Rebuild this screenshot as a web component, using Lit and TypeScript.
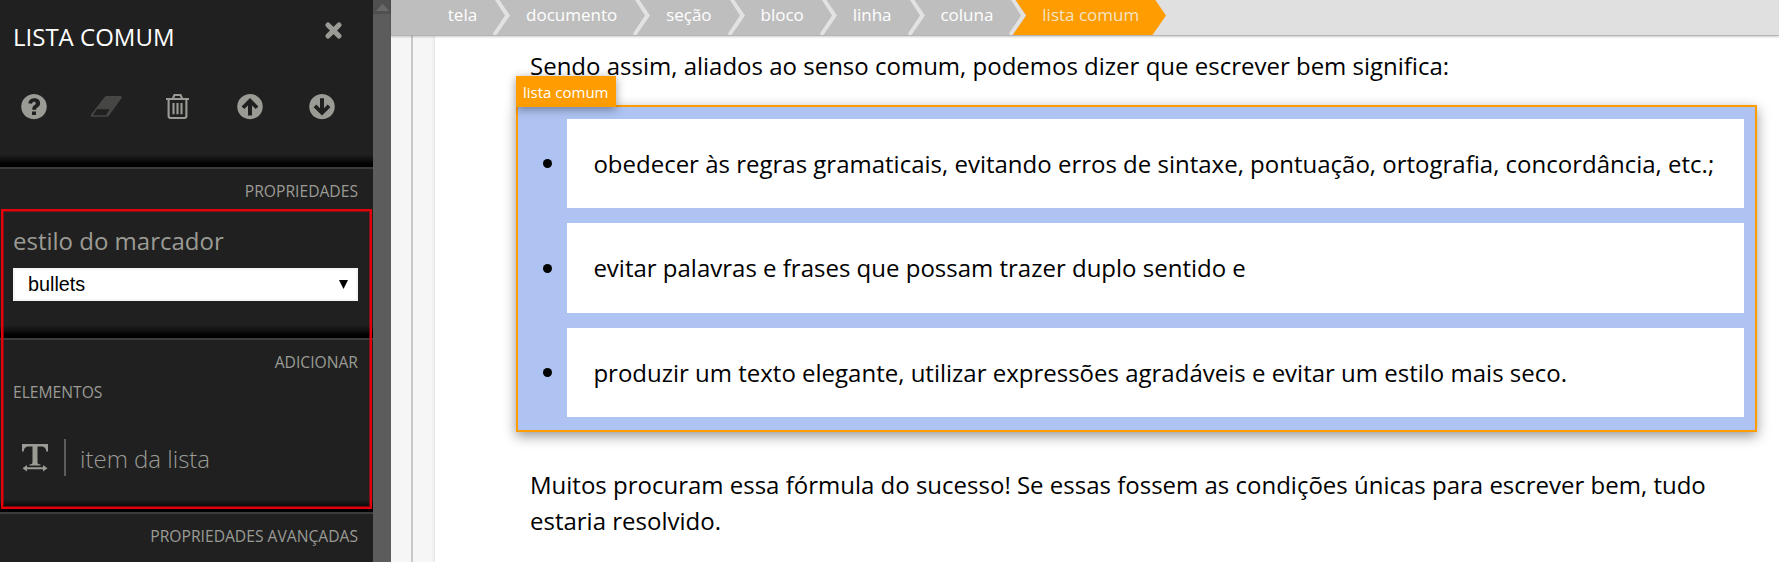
import { LitElement, html, css, svg } from "lit";
import { customElement } from "lit/decorators.js";
import { classMap } from "lit/directives/class-map.js";

const icons = {
  help: svg`<path fill-rule="evenodd" d="M13 0a12.800 12.600 0 1 0 .001 0zM11 17.500h4v3.600h-4zM7.300 9.200C7.800 6 10.200 4.300 13.200 4.300c3.400 0 5.900 1.900 5.900 4.900 0 2.200-1.300 3.400-2.700 4.300-.9.600-1.300 1-1.300 2.300h-3.900c0-2.500.6-3.500 2.100-4.600 1-.7 1.500-1.100 1.500-1.900 0-1-.7-1.500-1.800-1.500-1.100 0-1.700.7-2 2z"/>`,
  eraser: svg`<path fill-rule="evenodd" d="M17.300 2h13c1.500 0 2 1.100 1.200 2.200L19.200 21.200c-.8 1.100-1.700 1.600-2.900 1.600H2.300c-1.500 0-2-1.100-1.200-2.300L14.300 3.500c.9-1.100 1.700-1.500 3-1.500zM6.800 15.200L3 21.200h13.200L19.500 15.200z"/>`,
  trash: svg`<path fill="none" stroke="currentColor" stroke-width="2.100" d="M0 5h23M2.600 5V22a2 2 0 0 0 2 2h13.800a2 2 0 0 0 2-2V5M6.700 5l1.700-4h6.200l1.700 4M7.500 9v11.200M11.500 9v11.200M15.500 9v11.200"/>`,
  up: svg`<path fill-rule="evenodd" d="M13 0a12.800 12.600 0 1 0 .001 0zM13 4.100l8.400 8.300-2.700 2.700-3.700-3.700v10h-4v-10l-3.700 3.700-2.700-2.700z"/>`,
  down: svg`<path fill-rule="evenodd" d="M13 0a12.800 12.600 0 1 0 .001 0zM13 21.500l8.400-8.300-2.700-2.700-3.700 3.700v-10h-4v10l-3.700-3.700-2.700 2.700z"/>`,
};

@customElement("editor-sidebar")
export class EditorSidebar extends LitElement {
  static styles = css`
    :host { display: flex; flex: none; width: 391px; height: 562px; font-family: "Open Sans", sans-serif; color: #9b9b95; }
    .panel { position: relative; width: 373px; background: #202020; overflow: hidden; }
    .section { box-sizing: border-box; border-bottom: 2px solid #3b3b3b; padding: 0 15px 0 13px; background: linear-gradient(to top, #000 0, #000 3px, rgba(0, 0, 0, .55) 7px, transparent 13px) #202020; }
    .actions { height: 169px; }
    .properties { height: 171px; }
    .add { height: 174px; }
    .advanced { border: 0; background: #202020; }
    .top { display: flex; justify-content: space-between; padding: 20px 16px 0 0; height: 74px; box-sizing: border-box; }
    .title { color: #fff; font-size: 24px; line-height: 34px; white-space: nowrap; }
    .close { width: 17px; height: 17px; margin-top: 2px; }
    .tools { display: flex; width: 360px; margin-left: -15px; padding-top: 20px; }
    .tool { display: flex; justify-content: center; flex: none; width: 72px; }
    .off { color: #464644; }
    svg { display: block; fill: currentColor; overflow: visible; }
    .heading { font-size: 15.650px; line-height: 22px; text-align: right; padding-top: 11px; white-space: nowrap; }
    .label { font-size: 24px; line-height: 34px; margin-top: 22px; }
    .select { display: flex; align-items: center; justify-content: space-between; box-sizing: border-box; height: 33px; margin-top: 10px; padding: 0 8px 0 13px; border: 2px solid #f5f5f5; background: #fff; color: #000; font: 19.800px/29px "Liberation Sans", sans-serif; }
    .sub { font-size: 15.650px; line-height: 22px; margin-top: 8px; }
    .item { display: flex; align-items: center; margin-top: 36px; padding-left: 9px; height: 37px; }
    .rule { width: 2px; height: 37px; background: #5c5c5a; margin: 0 14px 0 16px; }
    .name { font-size: 24px; font-weight: 300; line-height: 34px; padding-top: 2px; }
    .scroll { display: flex; flex-direction: column; width: 18px; background: #5c5c5c; }
    .knob { display: flex; align-items: center; justify-content: center; height: 14px; background: #505050; color: #686868; }
    .focus { position: absolute; left: 1px; top: 209px; width: 371px; height: 300px; box-sizing: border-box; border: 2px solid #e3000b; box-shadow: inset 0 0 0 1px rgba(227, 0, 11, .5); }
  `;
  render() {
    return html`
      <div class="panel">
        <div class="section actions">
          <div class="top">
            <div class="title">LISTA COMUM</div>
            <svg class="close" viewBox="0 0 17 17"><path d="M3 3l11 11M14 3L3 14" stroke="currentColor" stroke-width="5.200" stroke-linecap="round"/></svg>
          </div>
          <div class="tools">
            <div class="tool"><svg width="26" height="26">${icons.help}</svg></div>
            <div class="tool off"><svg width="33" height="26">${icons.eraser}</svg></div>
            <div class="tool"><svg width="24" height="26">${icons.trash}</svg></div>
            <div class="tool"><svg width="26" height="26">${icons.up}</svg></div>
            <div class="tool"><svg width="26" height="26">${icons.down}</svg></div>
          </div>
        </div>
        <div class="section properties">
          <div class="heading">PROPRIEDADES</div>
          <div class="label">estilo do marcador</div>
          <div class="select"><span>bullets</span><svg width="9" height="9"><path d="M0 0h9L4.500 9z"/></svg></div>
        </div>
        <div class="section add">
          <div class="heading">ADICIONAR</div>
          <div class="sub">ELEMENTOS</div>
          <div class="item">
            <svg width="26" height="27"><path d="M0 0h26v7.500h-1.700C24 4 22.500 2.400 19 2.400h-3.500V18c0 2 .8 2.300 3 2.500V21.500H7.500v-1c2.200-.2 3-.5 3-2.500V2.400H7C3.500 2.400 2 4 1.700 7.500H0zM.5 24.300l4.500-3.300v2.300h16V21l4.500 3.300-4.500 3.300v-2.300H5v2.300z"/></svg>
            <div class="rule"></div>
            <div class="name">item da lista</div>
          </div>
        </div>
        <div class="section advanced">
          <div class="heading">PROPRIEDADES AVANÇADAS</div>
        </div>
        <div class="focus"></div>
      </div>
      <div class="scroll"><div class="knob"><svg width="13" height="8"><path d="M0 8L6.500 .5 13 8z"/></svg></div></div>`;
  }
}

@customElement("crumb-bar")
export class CrumbBar extends LitElement {
  static styles = css`
    :host { display: flex; height: 35px; background: #e0e0e0; border-bottom: 1px solid #b4b4b4; box-shadow: 0 1px 2px rgba(0, 0, 0, .2); font-family: "Open Sans", sans-serif; font-size: 17px; line-height: 29px; color: #fff; white-space: nowrap; position: relative; }
    .crumb { display: flex; background: #bebebe; }
    .text { padding: 0 16px 0 15.900px; }
    .first .text { padding-left: 56.800px; }
    .current { background: #ff9c00; color: #f3e3c4; }
    .current .text { padding-right: 9.800px; }
    svg { display: block; flex: none; width: 17px; height: 35px; }
    .body { fill: #bebebe; }
    .current .body { fill: #ff9c00; }
    .edge { fill: #e2e2e2; }
    .before { background: #ff9c00; }
    .end { background: #e0e0e0; }
  `;
  private names = ["tela", "documento", "seção", "bloco", "linha", "coluna", "lista comum"];
  render() {
    const last = this.names.length - 1;
    return this.names.map(
      (name, i) => html`<div class=${classMap({ crumb: true, first: i === 0, current: i === last })}>
        <span class="text">${name}</span>
        <svg class=${classMap({ before: i === last - 1, end: i === last })} viewBox="0 0 17 35">
          <path class="body" d="M0 0H6.400L17 15.500 3.500 35H0z"/>
          ${i < last ? svg`<path class="edge" d="M2 0H6.400L17 15.500 3.500 35H.3V33L12 15.500z"/>` : null}
        </svg>
      </div>`
    );
  }
}

@customElement("app-root")
export class AppRoot extends LitElement {
  static styles = css`
    :host { display: flex; width: 1779px; height: 562px; overflow: hidden; background: #fff; font-family: "Open Sans", sans-serif; color: #000; }
    .main { display: flex; flex-direction: column; flex: 1; min-width: 0; }
    .work { display: flex; flex: 1; background: #f6f6f6; }
    .gutter { box-sizing: border-box; width: 22px; border-right: 2px solid #c9c9c9; }
    .page { flex: 1; margin-left: 22px; padding: 12px 22px 0 81px; background: #fff; box-shadow: 0 0 4px rgba(0, 0, 0, .14); font-size: 24px; line-height: 36px; }
    .para { margin: 0 0 0 14px; }
    .frame { position: relative; box-sizing: border-box; height: 326.500px; margin: 21px 0 35px; border: 2px solid #ff9c00; background: #aec3f2; padding: 12.300px 11px 0 49px; box-shadow: 0 4px 12px rgba(0, 0, 0, .42); display: flex; flex-direction: column; gap: 15px; }
    .tag { position: absolute; left: -2px; top: -31px; width: 100px; height: 31px; box-sizing: border-box; padding-left: 7px; background: #ff9c00; color: #fff; font-size: 15px; line-height: 32px; white-space: nowrap; box-shadow: 0 2px 9px rgba(0, 0, 0, .4); }
    .row { display: flex; align-items: center; height: 89.200px; margin-left: -24px; }
    .dot { flex: none; width: 9px; height: 9px; margin-right: 15px; border-radius: 50%; background: #000; }
    .box { flex: 1; height: 100%; box-sizing: border-box; padding: 27px 0 0 26.400px; background: #fff; white-space: nowrap; }
  `;
  private items = [
    "obedecer às regras gramaticais, evitando erros de sintaxe, pontuação, ortografia, concordância, etc.;",
    "evitar palavras e frases que possam trazer duplo sentido e",
    "produzir um texto elegante, utilizar expressões agradáveis e evitar um estilo mais seco.",
  ];
  render() {
    return html`<editor-sidebar></editor-sidebar>
      <div class="main">
        <crumb-bar></crumb-bar>
        <div class="work">
          <div class="gutter"></div>
          <div class="page">
            <p class="para">Sendo assim, aliados ao senso comum, podemos dizer que escrever bem significa:</p>
            <div class="frame">
              <div class="tag">lista comum</div>
              ${this.items.map((t) => html`<div class="row"><span class="dot"></span><div class="box">${t}</div></div>`)}
            </div>
            <p class="para">Muitos procuram essa fórmula do sucesso! Se essas fossem as condições únicas para escrever bem, tudo<br>estaria resolvido.</p>
          </div>
        </div>
      </div>`;
  }
}
